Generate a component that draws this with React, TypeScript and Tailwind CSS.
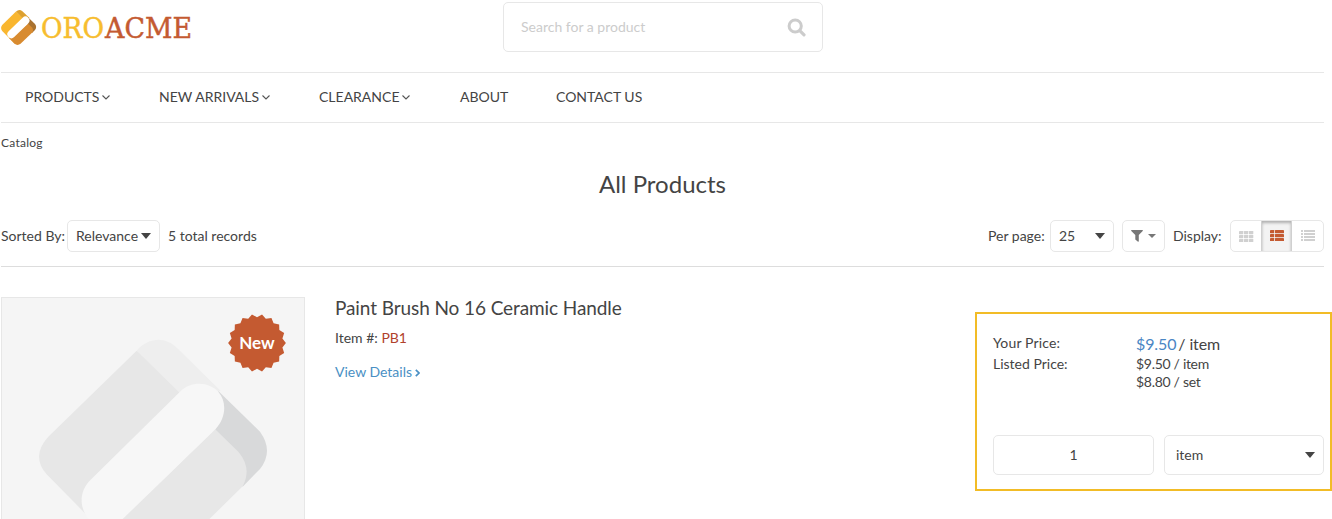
import type { ReactNode } from "react";

function AngleDown() {
  return (
    <svg width="8" height="5" viewBox="0 0 8 5" fill="none" className="mt-px shrink-0">
      <path d="M0.5 0.5L4 4L7.5 0.5" stroke="#555" strokeWidth="1.1" />
    </svg>
  );
}

function Caret({ className = "" }: { className?: string }) {
  return (
    <svg width="10" height="6" viewBox="0 0 10 6" className={"shrink-0 " + className}>
      <path d="M0 0H10L5 6Z" fill="#444" />
    </svg>
  );
}

function Logo() {
  return (
    <div className="flex h-[50px] w-[200px] shrink-0">
      <svg width="200" height="50" viewBox="0 0 200 50">
        <path d="M16 11.4L2.2 25Q0 28 2.2 31L14.5 43.6L26 21Z" fill="#f9b62f" />
        <path d="M16 11.4Q19.3 8.5 22.4 11.2L29.5 18L22.6 18.3Z" fill="#dda02e" />
        <path d="M28.3 17.6L35 24Q37.3 27 35 30L32 32.9L26.8 23.4Z" fill="#a97230" />
        <path d="M28 23.8L31.8 27.3Q34 30 32.3 32.6L20.8 43.6Q17.5 46.2 14.3 43.6L9 38Z" fill="#d88b30" />
        <path d="M25.4 20.6L11.4 34.2" stroke="#fff" strokeWidth="8" strokeLinecap="round" />
        <g fontSize="27.8" strokeWidth="0.45" className="font-['DejaVu_Serif',serif]">
          <text x="41" y="37.8" textLength="63" lengthAdjust="spacingAndGlyphs" fill="#f7bd2e" stroke="#f7bd2e">ORO</text>
          <text x="105" y="37.8" textLength="87" lengthAdjust="spacingAndGlyphs" fill="#c45a31" stroke="#c45a31">ACME</text>
        </g>
      </svg>
    </div>
  );
}

function NavItem({ label, menu, className }: { label: string; menu?: boolean; className: string }) {
  return (
    <a className={"flex items-center gap-[3px] whitespace-nowrap " + className}>
      {label}
      {menu && <AngleDown />}
    </a>
  );
}

function Box({ className, children }: { className: string; children: ReactNode }) {
  return <div className={"flex shrink-0 items-center rounded-[5px] border border-[#e7e7e7] " + className}>{children}</div>;
}

function GridIcon() {
  return (
    <svg width="15" height="11" viewBox="0 0 15 11" fill="#d0d0d0">
      {[0, 4, 8].map((y) => [0, 5, 10].map((x) => <rect key={x + "-" + y} x={x} y={y} width="4.3" height="3.2" rx="0.4" />))}
    </svg>
  );
}

function TileListIcon() {
  return (
    <svg width="14" height="11" viewBox="0 0 14 11" fill="#c45a31">
      {[0, 4, 8].map((y) => (
        <g key={y}>
          <rect x="0" y={y} width="4.2" height="3.2" rx="0.4" />
          <rect x="5" y={y} width="9" height="3.2" rx="0.4" />
        </g>
      ))}
    </svg>
  );
}

function RowsIcon() {
  return (
    <svg width="14" height="11" viewBox="0 0 14 11" fill="#d0d0d0">
      {[0, 3, 6, 9].map((y) => (
        <g key={y}>
          <rect x="0" y={y} width="2" height="2" />
          <rect x="3" y={y} width="11" height="2" />
        </g>
      ))}
    </svg>
  );
}

const badgePoints = Array.from({ length: 36 }, (_, i) => {
  const r = i % 2 === 0 ? 28.9 : 25.8;
  const a = (i * Math.PI) / 18;
  return `${(29 + r * Math.cos(a)).toFixed(2)},${(29 + r * Math.sin(a)).toFixed(2)}`;
}).join(" ");

function ProductImage() {
  return (
    <div className="relative h-[223px] w-[304px] shrink-0 overflow-hidden border border-b-0 border-[#e7e7e7] bg-[#f5f5f5]">
      <svg width="302" height="222" viewBox="6 39 906 666" className="block">
        <path d="M410 197L145 455Q92 513 140 568L275 705H400L600 330Z" fill="#e7e7e7" />
        <path d="M410 197C447 155 497 155 532 190L662 318L540 325Z" fill="#eeeeee" />
        <path d="M655 318L780 440Q822 498 780 552L728 605L630 430Z" fill="#d8d9da" />
        <path d="M645 432L715 500Q757 550 728 604L625 705H365Z" fill="#e7e7e7" />
        <path d="M540 320C573 287 628 289 656 322C680 350 679 397 647 432L365 705H268C238 671 235 620 272 584Z" fill="#f7f7f7" />
      </svg>
      <div className="absolute top-[16px] left-[226px] flex h-[58px] w-[58px] items-center justify-center">
        <svg width="58" height="58" viewBox="0 0 58 58" className="absolute inset-0">
          <polygon points={badgePoints} fill="#c45a31" />
        </svg>
        <span className="relative -mt-[2px] text-[17px] leading-none font-bold text-white">New</span>
      </div>
    </div>
  );
}

export default function App() {
  return (
    <div className="h-[519px] w-[1332px] overflow-hidden bg-white pl-px font-['Lato',sans-serif] text-[14px] leading-[18px] text-[#444]">
      <header className="flex h-[72px] w-[1323px] items-start">
        <div className="-ml-px w-[503px] shrink-0">
          <Logo />
        </div>
        <Box className="mt-[2px] h-[50px] w-[320px] justify-between pr-[16px] pl-[17px] text-[#ccc]">
          <span>Search for a product</span>
          <svg width="19" height="19" viewBox="0 0 19 19" fill="none" stroke="#ccc">
            <circle cx="8.2" cy="8" r="6.1" strokeWidth="3" />
            <path d="M13 12.8L17 16.8" strokeWidth="3.2" strokeLinecap="round" />
          </svg>
        </Box>
      </header>

      <nav className="flex h-[51px] w-[1323px] items-center border-y border-[#e7e7e7] pb-[2px] pl-6">
        <NavItem label="PRODUCTS" menu className="w-[134px]" />
        <NavItem label="NEW ARRIVALS" menu className="w-[160px]" />
        <NavItem label="CLEARANCE" menu className="w-[141px]" />
        <NavItem label="ABOUT" className="w-[96px]" />
        <NavItem label="CONTACT US" className="w-[100px]" />
      </nav>

      <div className="mt-[11px] h-[18px] text-[12px] tracking-[0.25px]">Catalog</div>
      <h1 className="mt-[17px] h-[31px] w-[1323px] text-center text-[24px] leading-[30px]">All Products</h1>

      <div className="mt-[20px] flex h-[47px] w-[1323px] items-start border-b border-[#ddd]">
        <div className="flex h-8 w-[66px] items-center whitespace-nowrap">Sorted By:</div>
        <Box className="h-8 w-[93px] justify-between pr-2 pl-2">
          Relevance
          <Caret />
        </Box>
        <div className="ml-[8px] flex h-8 items-center">5 total records</div>
        <div className="ml-auto flex h-8 items-center">
          <span className="w-[62px] whitespace-nowrap">Per page:</span>
          <Box className="h-8 w-[64px] justify-between pr-2 pl-2">
            25
            <Caret />
          </Box>
          <Box className="ml-2 h-8 w-[43px] justify-between pr-2 pl-2">
            <svg width="12" height="12" viewBox="0 0 12 12" fill="#777">
              <path d="M0.3 0H11.7Q12 0.5 11.7 1L7.8 5V11.3Q7.6 12 7 11.7L4.3 9.5V5L0.3 1Q0 0.5 0.3 0Z" />
            </svg>
            <svg width="8" height="4" viewBox="0 0 8 4" fill="#777">
              <path d="M0 0H8L4 4Z" />
            </svg>
          </Box>
          <span className="ml-2 w-[57px]">Display:</span>
          <Box className="h-8 w-[94px] overflow-hidden">
            <div className="flex h-full w-[30px] items-center justify-center">
              <GridIcon />
            </div>
            <div className="flex h-full w-[31px] items-center justify-center border-x border-[#d0d0d0] bg-[#f3f3f3] pb-px shadow-[inset_0_2px_3px_rgba(0,0,0,0.28)]">
              <TileListIcon />
            </div>
            <div className="flex h-full w-[31px] items-center justify-center pb-px">
              <RowsIcon />
            </div>
          </Box>
        </div>
      </div>

      <main className="mt-[30px] flex w-[1331px] items-start">
        <ProductImage />
        <section className="ml-[30px]">
          <h2 className="-mt-px h-[25px] text-[19px] leading-6 tracking-[-0.09px] whitespace-nowrap">Paint Brush No 16 Ceramic Handle</h2>
          <p className="mt-2">
            Item #: <span className="text-[#b0412c]">PB1</span>
          </p>
          <a className="mt-4 flex items-center gap-[3px] text-[#4a90c4]">
            View Details
            <svg width="5" height="8" viewBox="0 0 5 8" fill="none" className="mt-px">
              <path d="M0.8 0.8L4 4L0.8 7.2" stroke="#4a90c4" strokeWidth="1.7" />
            </svg>
          </a>
        </section>
        <aside className="mt-[15px] ml-auto h-[179px] w-[357px] shrink-0 border-2 border-[#f2bc26] pl-4">
          <div className="grid h-[121px] grid-cols-[143px_1fr] content-start pt-[20px]">
            <div className="h-[21px] tracking-[0.15px]">Your Price:</div>
            <div className="flex h-[21px] items-start gap-[2px] pt-px text-[16px] tracking-[-0.12px]">
              <span className="text-[#4a86c4]">$9.50</span>
              <span>/ item</span>
            </div>
            <div>Listed Price:</div>
            <div className="tracking-[-0.3px]">
              <p>$9.50 / item</p>
              <p>$8.80 / set</p>
            </div>
          </div>
          <div className="flex gap-[10px]">
            <Box className="h-10 w-[161px] justify-center">1</Box>
            <Box className="h-10 w-[160px] justify-between pr-2 pl-[11px]">
              item
              <Caret />
            </Box>
          </div>
        </aside>
      </main>
    </div>
  );
}
